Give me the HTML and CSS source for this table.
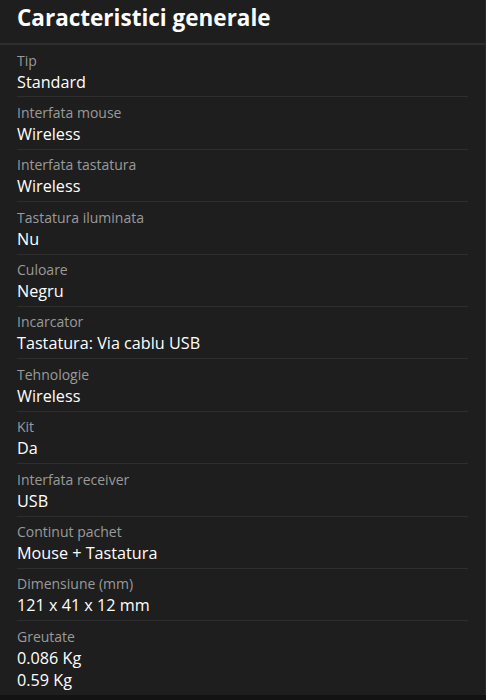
FILE: index.html
```html
<!DOCTYPE html>
<html lang="ro">
<head>
<meta charset="utf-8">
<title>Caracteristici generale</title>
<link rel="stylesheet" href="styles.css">
</head>
<body>
<section class="panel">
  <h2 class="panel-title">Caracteristici generale</h2>
  <dl class="specs">
    <div class="spec"><dt>Tip</dt><dd>Standard</dd></div>
    <div class="spec"><dt>Interfata mouse</dt><dd>Wireless</dd></div>
    <div class="spec"><dt>Interfata tastatura</dt><dd>Wireless</dd></div>
    <div class="spec"><dt>Tastatura iluminata</dt><dd>Nu</dd></div>
    <div class="spec"><dt>Culoare</dt><dd>Negru</dd></div>
    <div class="spec"><dt>Incarcator</dt><dd>Tastatura: Via cablu USB</dd></div>
    <div class="spec"><dt>Tehnologie</dt><dd>Wireless</dd></div>
    <div class="spec"><dt>Kit</dt><dd>Da</dd></div>
    <div class="spec"><dt>Interfata receiver</dt><dd>USB</dd></div>
    <div class="spec"><dt>Continut pachet</dt><dd>Mouse + Tastatura</dd></div>
    <div class="spec"><dt>Dimensiune (mm)</dt><dd>121 x 41 x 12 mm</dd></div>
    <div class="spec last"><dt>Greutate</dt><dd>0.086 Kg</dd><dd>0.59 Kg</dd></div>
  </dl>
</section>
</body>
</html>
```
FILE: styles.css
```css
html, body {
  margin: 0;
  padding: 0;
  background: #131313;
  font-family: "Open Sans", "Noto Sans", sans-serif;
}
.panel {
  width: 485px;
  height: 695px;
  background: #1e1e1e;
  border-right: 1px solid #2a2a2a;
  overflow: hidden;
}
.panel-title {
  margin: 0;
  padding: 0 17px;
  height: 43px;
  line-height: 36px;
  font-size: 22.5px;
  font-weight: 700;
  color: #ffffff;
  border-bottom: 2px solid #2e2e2e;
}
.specs {
  margin: 0 17px;
  padding: 0;
}
.spec {
  padding: 5.5px 0 3.9px;
  border-bottom: 1px solid #2e2e2e;
}
.spec.last {
  border-bottom: none;
}
.spec dt {
  font-size: 14px;
  line-height: 20px;
  color: #9a9a9a;
}
.spec dd {
  margin: 0;
  font-size: 16.2px;
  line-height: 22px;
  color: #ffffff;
}
```
